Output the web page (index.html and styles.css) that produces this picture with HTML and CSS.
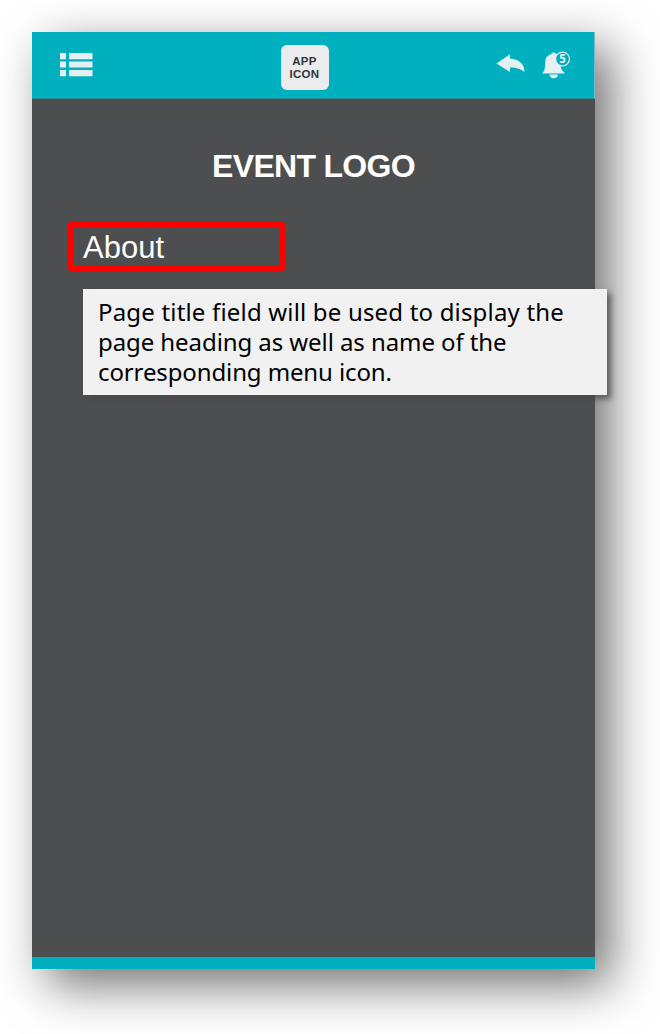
FILE: index.html
```
<!DOCTYPE html>
<html lang="en">
<head>
<meta charset="utf-8">
<title>Event app – About</title>
<link rel="stylesheet" href="styles.css">
</head>
<body>
<main class="phone">
  <header class="bar">
    <svg class="menu" width="34" height="25" viewBox="0 0 34 25"><path d="M1 1h6v6.300H1zM10 1h23.500v6.300H10zM1 9.600h6v6H1zM10 9.600h23.500v6H10zM1 18h6v6.300H1zM10 18h23.500v6.300H10z"/></svg>
    <div class="app-icon"><span>APP</span><span>ICON</span></div>
    <div class="actions">
      <svg width="30" height="20" viewBox="496 53 30 20"><path d="M496.500 63.500L510 54.200V58.500C519 59 524.500 64 524.500 72Q518.500 67 510 67.500V72Z"/></svg>
      <svg class="bell" width="30" height="30" viewBox="541 50 30 30">
        <path d="M542 73.500C546 70 544.500 66 545.500 60C546 56 549 55 551 54.500Q551 52.500 553.500 52.500Q556 52.500 557 54.500L561 67C561 70 563 71 565 73.500ZM549.500 74.500H558Q557.500 78.300 553.800 78.300Q550 78.300 549.500 74.500Z"/>
        <circle cx="562.500" cy="59" r="6.900"/>
        <text x="562.500" y="63" text-anchor="middle">5</text>
      </svg>
    </div>
  </header>
  <h1>EVENT LOGO</h1>
  <h2>About</h2>
  <p class="note"><span class="line l1">Page title field will be used to display the</span><span class="line l2">page heading as well as name of the</span><span class="line l3">corresponding menu icon.</span></p>
</main>
</body>
</html>
```
FILE: styles.css
```
* { box-sizing: border-box; }
body {
  margin: 0;
  padding: 32px 0 0 32px;
  height: 1034px;
  overflow: hidden;
  background: #fff;
  font-family: "Liberation Sans", Arial, sans-serif;
}
.phone {
  display: flex;
  flex-direction: column;
  align-items: flex-start;
  width: 563px;
  height: 937px;
  background: #4d4e50;
  border-bottom: 12px solid #00b0be;
  box-shadow: 16px 16px 46px rgba(0, 0, 0, .56);
}
.bar {
  display: flex;
  justify-content: space-between;
  width: 100%;
  height: 67px;
  padding: 0 23px 0 27px;
  background: #00b0be;
  border-bottom: 1px solid #278d96;
  border-right: 1px solid #7bb9bf;
}
.bar svg { fill: #e4f0f4; display: block; }
.menu { margin-top: 20px; }
.app-icon {
  display: flex;
  flex-direction: column;
  align-items: center;
  justify-content: center;
  width: 48px;
  height: 45px;
  margin: 13px 0 0 20px;
  border-radius: 6px;
  background: #ebecee;
  color: #343438;
  font-size: 11.500px;
  font-weight: bold;
  line-height: 13px;
  letter-spacing: .3px;
}
.actions { display: flex; gap: 15px; padding-top: 21px; }
.actions .bell { margin-top: -3px; }
.bell circle { fill: #00a8b6; stroke: #d2f0f3; stroke-width: 1.300px; }
.bell text { font: bold 11.500px "Open Sans", sans-serif; fill: #e4f5f7; }
h1 {
  width: 100%;
  margin: 49px 0 0;
  color: #fff;
  text-align: center;
  font-size: 32px;
  line-height: 37px;
  letter-spacing: -.7px;
}
h2 {
  width: 219px;
  height: 51px;
  margin: 36px 0 0 35px;
  padding: 1px 0 0 10px;
  border: 6px solid #f00;
  border-radius: 6px;
  color: #fff;
  font-size: 31px;
  font-weight: normal;
  line-height: 40px;
}
.note {
  width: 524px;
  height: 106px;
  margin: 17px 0 0 51px;
  padding: 8px 0 0 15px;
  background: #f1f1f1;
  box-shadow: 4px 4px 6px rgba(72, 73, 75, .8);
  color: #000;
  font: 24px/30px "Noto Sans", sans-serif;
  white-space: nowrap;
}
.line { display: block; }
.l1 { letter-spacing: .18px; }
.l2 { letter-spacing: -.08px; }
.l3 { letter-spacing: -.12px; }
```
